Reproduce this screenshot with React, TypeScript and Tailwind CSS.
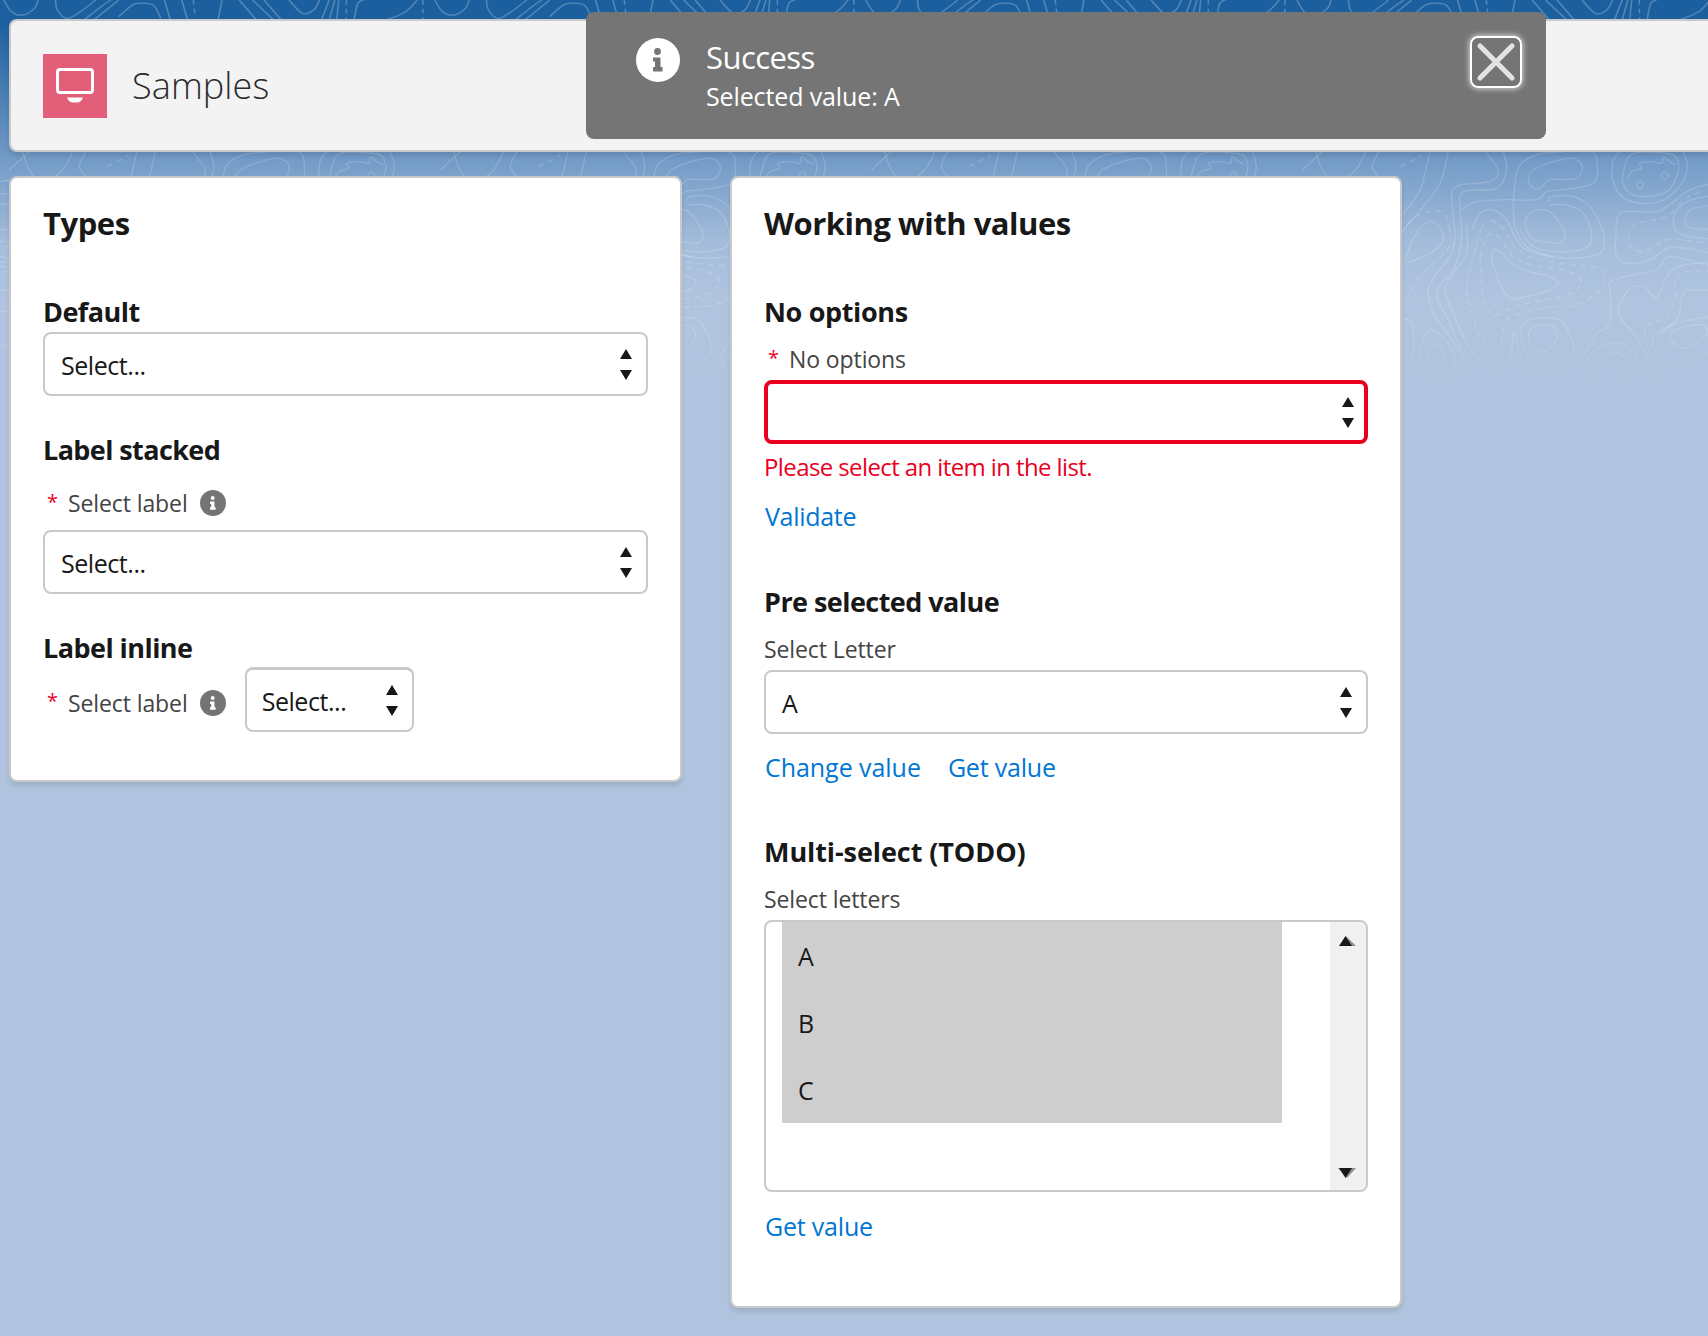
import React from "react";

type P = [number, number];

function smooth(pts: P[], closed = false): string {
  const n = pts.length;
  const at = (i: number): P => (closed ? pts[(i + n) % n] : pts[Math.max(0, Math.min(n - 1, i))]);
  let d = `M${pts[0][0]} ${pts[0][1]}`;
  const end = closed ? n : n - 1;
  for (let i = 0; i < end; i++) {
    const p0 = at(i - 1), p1 = at(i), p2 = at(i + 1), p3 = at(i + 2);
    const c1: P = [p1[0] + (p2[0] - p0[0]) / 6, p1[1] + (p2[1] - p0[1]) / 6];
    const c2: P = [p2[0] - (p3[0] - p1[0]) / 6, p2[1] - (p3[1] - p1[1]) / 6];
    d += ` C${c1[0]} ${c1[1]} ${c2[0]} ${c2[1]} ${p2[0]} ${p2[1]}`;
  }
  return d + (closed ? " Z" : "");
}

const solidClosed: P[][] = [
  [[385, 85], [400, 60], [460, 35], [520, 25], [547, 50], [530, 85], [470, 88], [445, 90], [420, 115], [395, 110]],
  [[375, 220], [395, 185], [440, 180], [470, 205], [495, 250], [480, 278], [430, 275], [395, 265]],
  [[20, 335], [30, 290], [60, 235], [95, 215], [125, 240], [125, 280], [80, 315]],
  [[275, 320], [295, 300], [330, 335], [370, 360], [450, 380], [475, 400], [450, 420], [380, 440], [330, 445], [300, 400]],
  [[668, 95], [690, 130], [740, 140], [800, 125], [830, 80], [835, 40], [810, 12], [700, 10], [672, 60]],
  [[710, 105], [720, 93], [731, 105], [720, 117]],
  [[783, 77], [793, 65], [804, 77], [793, 89]],
  [[810, 560], [840, 535], [910, 525], [915, 560], [850, 595]],
  [[385, 560], [400, 530], [460, 530], [470, 570], [430, 605], [395, 590]],
  [[365, 530], [400, 505], [480, 510], [515, 570], [520, 610], [480, 635], [400, 635], [370, 590]],
  [[80, 615], [110, 585], [135, 620], [125, 650], [90, 645]],
  [[60, 600], [90, 540], [140, 575], [165, 640], [130, 685], [75, 660]],
];

const solidOpen: P[][] = [
  [[635, 80], [660, 135], [720, 160], [790, 150], [845, 100], [862, 50], [850, 5]],
  [[635, 80], [640, 30], [660, 5]],
  [[680, 90], [695, 65], [725, 55], [720, 40], [755, 35], [785, 40], [790, 20], [810, 35], [828, 45]],
  [[340, 150], [350, 70], [370, 35], [430, 10], [570, 5], [592, 50], [580, 100], [500, 118], [440, 125], [415, 148], [340, 150]],
  [[445, 155], [455, 140], [520, 140], [570, 170], [610, 250], [600, 310], [510, 325], [440, 315], [380, 290], [345, 230], [340, 150]],
  [[450, 165], [500, 165], [550, 190], [575, 255], [555, 295], [470, 305], [400, 290], [360, 240]],
  [[10, 190], [60, 120], [90, 5]],
  [[10, 240], [70, 170], [120, 100], [145, 5]],
  [[255, 5], [295, 60], [270, 95], [180, 105], [155, 130], [160, 200], [165, 260], [150, 320], [110, 370], [85, 420], [100, 490], [150, 560], [185, 630], [190, 680]],
  [[310, 5], [320, 60], [290, 115], [190, 125], [180, 180], [185, 260], [165, 350], [110, 430], [150, 520], [215, 680]],
  [[185, 180], [230, 155], [340, 148]],
  [[200, 220], [200, 310], [160, 370], [135, 420], [160, 490], [205, 590], [250, 640], [300, 655], [330, 630], [340, 550], [350, 560], [365, 630], [420, 665], [510, 650], [560, 600], [590, 550], [630, 520], [630, 420], [630, 395], [700, 375], [770, 360], [810, 320], [924, 345], [1000, 350]],
  [[215, 240], [240, 190], [280, 180], [320, 210], [345, 260], [380, 300], [460, 322]],
  [[650, 210], [670, 185], [770, 185], [815, 160], [880, 115], [1000, 90]],
  [[650, 210], [650, 320], [700, 340], [760, 325], [800, 295], [860, 295], [1000, 325]],
  [[1000, 130], [890, 145], [840, 170], [820, 215], [850, 255], [1000, 275]],
  [[1000, 160], [880, 175], [855, 210], [880, 235], [1000, 238]],
  [[1000, 335], [850, 345], [800, 380], [770, 445], [730, 410], [685, 420], [655, 490], [700, 550], [740, 620], [750, 700]],
  [[1000, 420], [890, 420], [850, 430], [830, 510], [760, 560], [775, 620], [820, 650], [924, 610], [1000, 580]],
  [[785, 550], [830, 520], [924, 500], [1000, 480]],
  [[580, 690], [620, 620], [660, 610], [690, 650], [680, 700]],
  [[550, 640], [600, 590], [660, 580], [710, 620], [720, 700]],
  [[10, 505], [35, 520], [40, 600], [20, 680]],
  [[1040, 5], [1060, 60], [1100, 100], [1160, 60], [1190, 5]],
  [[1060, 5], [1000, 60]],
  [[1230, 5], [1210, 50], [1240, 90], [1293, 130]],
];

const dashedPaths: P[][] = [
  [[5, 250], [40, 205], [100, 182], [135, 195], [150, 250], [145, 295], [100, 340], [60, 380], [20, 450]],
  [[245, 230], [270, 212], [310, 235], [345, 290], [400, 325], [480, 340], [585, 352], [612, 380], [600, 420], [530, 465], [440, 472], [350, 495], [315, 520], [300, 590], [280, 608], [240, 560], [210, 470], [200, 410], [225, 300], [245, 230]],
  [[240, 320], [265, 255], [300, 265], [345, 325], [420, 350], [500, 362], [545, 395], [510, 430], [440, 448], [340, 470], [280, 495], [250, 440], [240, 320]],
  [[900, 125], [850, 150], [800, 200], [720, 218], [690, 240], [690, 285], [730, 305], [790, 275], [830, 268], [1000, 290]],
  [[1000, 365], [840, 370], [825, 440], [800, 500], [740, 525], [735, 545], [750, 630]],
  [[0, 50], [40, 30], [65, 15]],
];

const topLines: P[][] = [
  [[10, 0], [30, 35], [60, 45], [90, 25], [100, 0]],
  [[145, 0], [150, 30], [175, 55], [210, 35], [250, 0]],
  [[220, 60], [270, 15], [290, 0]],
  [[245, 60], [300, 10], [310, 0]],
  [[310, 50], [340, 20], [360, 10], [400, 15], [420, 55]],
  [[430, 0], [445, 60]],
  [[475, 0], [490, 60]],
  [[570, 60], [580, 0]],
  [[625, 0], [670, 60]],
  [[660, 0], [715, 60]],
  [[690, 0], [735, 60]],
  [[755, 0], [790, 40], [820, 30], [835, 0]],
  [[840, 60], [860, 0]],
  [[860, 60], [875, 0]],
  [[885, 0], [880, 60]],
  [[925, 60], [935, 10], [950, 0]],
  [[1010, 60], [1060, 35], [1090, 0]],
];

function Background() {
  return (
    <svg className="absolute left-0 top-0 pointer-events-none" width="1708" height="400" aria-hidden="true">
      <defs>
        <linearGradient id="fade" x1="0" y1="0" x2="0" y2="400" gradientUnits="userSpaceOnUse">
          <stop offset="0.82" stopColor="#fff" />
          <stop offset="0.97" stopColor="#000" />
        </linearGradient>
        <mask id="fadeMask" maskUnits="userSpaceOnUse" x="0" y="0" width="1708" height="400">
          <rect width="1708" height="400" fill="url(#fade)" />
        </mask>
        <pattern id="contour" patternUnits="userSpaceOnUse" x="107" y="150" width="431" height="250">
          <g transform="scale(0.3333)" fill="none" stroke="#ffffff" strokeOpacity="0.17" strokeWidth="4">
            {solidClosed.map((p, i) => <path key={i} d={smooth(p, true)} />)}
            {solidOpen.map((p, i) => <path key={i} d={smooth(p)} />)}
            {dashedPaths.map((p, i) => <path key={i} d={smooth(p)} strokeDasharray="18 14" />)}
          </g>
        </pattern>
        <pattern id="contourTop" patternUnits="userSpaceOnUse" x="0" y="0" width="431" height="20">
          <g transform="scale(0.3827 0.3333)" fill="none" stroke="#ffffff" strokeOpacity="0.25" strokeWidth="4">
            {topLines.map((p, i) => <path key={i} d={smooth(p)} />)}
            <path d="M505 0L510 50M1105 0L1105 60M905 0L905 60" strokeDasharray="14 12" />
          </g>
        </pattern>
      </defs>
      <rect x="0" y="0" width="1708" height="20" fill="url(#contourTop)" />
      <rect x="0" y="150" width="1708" height="250" fill="url(#contour)" mask="url(#fadeMask)" />
    </svg>
  );
}

function Arrows({ className = "" }: { className?: string }) {
  return (
    <svg width="12" height="31" viewBox="0 0 12 31" className={className} aria-hidden="true">
      <path d="M6 0L12 10H0Z" fill="#181818" />
      <path d="M0 21H12L6 31Z" fill="#181818" />
    </svg>
  );
}

function InfoGlyph({ size, bg, fg }: { size: number; bg: string; fg: string }) {
  return (
    <svg width={size} height={size} viewBox="0 0 44 44" className="shrink-0" aria-hidden="true">
      <circle cx="22" cy="22" r="22" fill={bg} />
      <circle cx="21.5" cy="13.5" r="3.4" fill={fg} />
      <path d="M17 19.5H24.5V29H26.5V33.5H17V29H19V23.5H17Z" fill={fg} />
    </svg>
  );
}

function Select({ value, invalid, compact }: { value?: string; invalid?: boolean; compact?: boolean }) {
  const variant = compact
    ? "w-[169px] h-[65px] border-2 border-t-[3px] border-[#c9c9c9] pl-[15px] pr-[14px]"
    : invalid
      ? "w-full h-[64px] border-4 border-[#ea001e] pl-[14px] pr-[10px]"
      : "w-full h-[64px] border-2 border-[#c9c9c9] pl-[16px] pr-[14px]";
  return (
    <div className={`flex items-center justify-between rounded-lg bg-white text-[#181818] ${variant}`}>
      <span className="pt-[2px] text-[25px] leading-8 tracking-[-0.45px]">{value ?? ""}</span>
      <Arrows />
    </div>
  );
}

function SectionTitle({ children, className = "", tracking = "tracking-[-0.55px]" }: { children: React.ReactNode; className?: string; tracking?: string }) {
  return <h3 className={`h-9 text-[27px] leading-9 font-bold text-[#181818] ${tracking} ${className}`}>{children}</h3>;
}

function Label({ children, required, info, className = "" }: { children: React.ReactNode; required?: boolean; info?: boolean; className?: string }) {
  return (
    <div className={`flex items-center h-8 text-[23px] leading-8 text-[#444444] tracking-[-0.1px] ${className}`}>
      {required ? <span className="w-[25px] pl-[4px] -mt-[3px] text-[20px] text-[#ea001e]">*</span> : null}
      <span>{children}</span>
      {info ? <span className="ml-[12px] flex"><InfoGlyph size={26} bg="#747474" fg="#ffffff" /></span> : null}
    </div>
  );
}

function LinkText({ children, tracking = "tracking-[-0.3px]" }: { children: React.ReactNode; tracking?: string }) {
  return <a className={`text-[25px] leading-8 text-[#0176d3] ${tracking}`}>{children}</a>;
}

function Card({ title, className = "", children }: { title: string; className?: string; children: React.ReactNode }) {
  return (
    <section className={`rounded-lg border-2 border-[#c9c9c9] bg-white shadow-[0_4px_4px_rgba(0,0,0,0.1)] px-[32px] pt-[25px] ${className}`}>
      <h2 className="h-10 text-[31px] leading-10 font-bold text-[#181818] tracking-[-0.47px]">{title}</h2>
      {children}
    </section>
  );
}

function ListBox() {
  return (
    <div className="flex h-[272px] rounded-lg border-2 border-[#c9c9c9] bg-white overflow-hidden mt-[5px]">
      <div className="flex-1 pl-[16px]">
        <div className="w-[500px] bg-[#cecece] text-[25px] text-[#181818] tracking-[-0.5px]">
          {["A", "B", "C"].map((o) => (
            <div key={o} className="h-[67px] pl-[16px] pt-[2px] flex items-center">{o}</div>
          ))}
        </div>
      </div>
      <div className="w-[36px] bg-[#f0f0f0] flex flex-col items-center justify-between pt-[14px] pb-[11px] pr-[2px]">
        <svg width="18" height="11" viewBox="0 0 18 11" aria-hidden="true">
          <path d="M8 0L18 10H12Z" fill="#8f8f8f" />
          <path d="M7.5 0L14 10H1Z" fill="#181818" />
        </svg>
        <svg width="18" height="11" viewBox="0 0 18 11" aria-hidden="true">
          <path d="M0 0H18L9 10Z" fill="#8f8f8f" />
          <path d="M1 0H14L7.5 10Z" fill="#181818" />
        </svg>
      </div>
    </div>
  );
}

export default function App() {
  return (
    <div
      className="relative min-h-[1336px] overflow-hidden pt-[19px] pl-[9px] bg-[linear-gradient(to_bottom,#1b5f9e_0px,#1b5f9e_20px,#7099c6_155px,#a5bddb_245px,#b0c4df_300px)]"
      style={{ fontFamily: '"Open Sans", "Noto Sans", "Liberation Sans", sans-serif' }}
    >
      <Background />

      <header className="relative flex h-[133px] items-center rounded-l-lg border-2 border-r-0 border-[#c9c9c9] bg-[#f3f3f3] pl-[32px] shadow-[0_4px_4px_rgba(0,0,0,0.1)]">
        <div className="flex h-16 w-16 items-center justify-center bg-[#e35e78]">
          <svg width="40" height="36" viewBox="0 0 40 36" aria-hidden="true">
            <rect x="2.5" y="1.5" width="35" height="23" rx="2.5" fill="none" stroke="#fff" strokeWidth="3" />
            <path d="M12 29.5H28C27 33 24.5 34.5 22 34.5H18C15.500 34.500 13 33 12 29.5Z" fill="#fff" />
          </svg>
        </div>
        <h1 className="ml-[25px] pt-[1px] text-[36px] leading-[48px] font-light text-[#2b2b2b] tracking-[0.1px]">Samples</h1>
      </header>

      <div className="absolute left-[586px] top-[12px] flex h-[127px] w-[960px] rounded-lg bg-[#757575] pl-[50px] pt-[26px] text-white">
        <InfoGlyph size={44} bg="#ffffff" fg="#757575" />
        <div className="ml-[26px]">
          <div className="text-[31px] leading-[38px] tracking-[-0.55px]">Success</div>
          <div className="text-[25px] leading-8 mt-[4px] tracking-[-0.12px]">Selected value: A</div>
        </div>
        <button className="absolute left-[884px] top-[24px] flex h-[52px] w-[52px] items-center justify-center rounded-lg border-2 border-white shadow-[0_0_6px_rgba(255,255,255,0.9)]">
          <svg width="38" height="38" viewBox="0 0 38 38" aria-hidden="true">
            <path d="M3 3L35 35M35 3L3 35" stroke="#e3e3e3" strokeWidth="5" strokeLinecap="round" />
          </svg>
        </button>
      </div>

      <div className="relative mt-[24px] flex items-start gap-[48px]">
        <Card title="Types" className="w-[673px] pb-[48px]">
          <SectionTitle className="mt-[51px]">Default</SectionTitle>
          <div className="mt-[2px]"><Select value="Select..." /></div>

          <SectionTitle className="mt-[36px]" tracking="tracking-[-0.6px]">Label stacked</SectionTitle>
          <Label required info className="mt-[19px]">Select label</Label>
          <div className="mt-[11px]"><Select value="Select..." /></div>

          <SectionTitle className="mt-[36px]">Label inline</SectionTitle>
          <div className="mt-[1px] flex items-center">
            <Label required info className="mt-[6px]">Select label</Label>
            <div className="ml-[19px]"><Select compact value="Select..." /></div>
          </div>
        </Card>

        <Card title="Working with values" className="w-[672px] pb-[64px]">
          <SectionTitle className="mt-[51px]" tracking="tracking-[-0.35px]">No options</SectionTitle>
          <Label required className="mt-[13px]">No options</Label>
          <div className="mt-[5px]"><Select invalid /></div>
          <div className="mt-[7px] h-8 text-[24px] leading-8 text-[#ea001e] tracking-[-0.6px]">Please select an item in the list.</div>
          <div className="mt-[17px] h-8 pl-[1px]"><LinkText>Validate</LinkText></div>

          <SectionTitle className="mt-[52px]">Pre selected value</SectionTitle>
          <Label className="mt-[13px]">Select Letter</Label>
          <div className="mt-[5px]"><Select value="A" /></div>
          <div className="mt-[17px] flex h-8 gap-[27px] pl-[1px]">
            <LinkText tracking="tracking-[-0.05px]">Change value</LinkText>
            <LinkText tracking="tracking-[-0.2px]">Get value</LinkText>
          </div>

          <SectionTitle className="mt-[51px]" tracking="tracking-[-0.08px]">Multi-select (TODO)</SectionTitle>
          <Label className="mt-[13px]">Select letters</Label>
          <ListBox />
          <div className="mt-[18px] h-8 pl-[1px]"><LinkText tracking="tracking-[-0.2px]">Get value</LinkText></div>
        </Card>
      </div>
    </div>
  );
}
